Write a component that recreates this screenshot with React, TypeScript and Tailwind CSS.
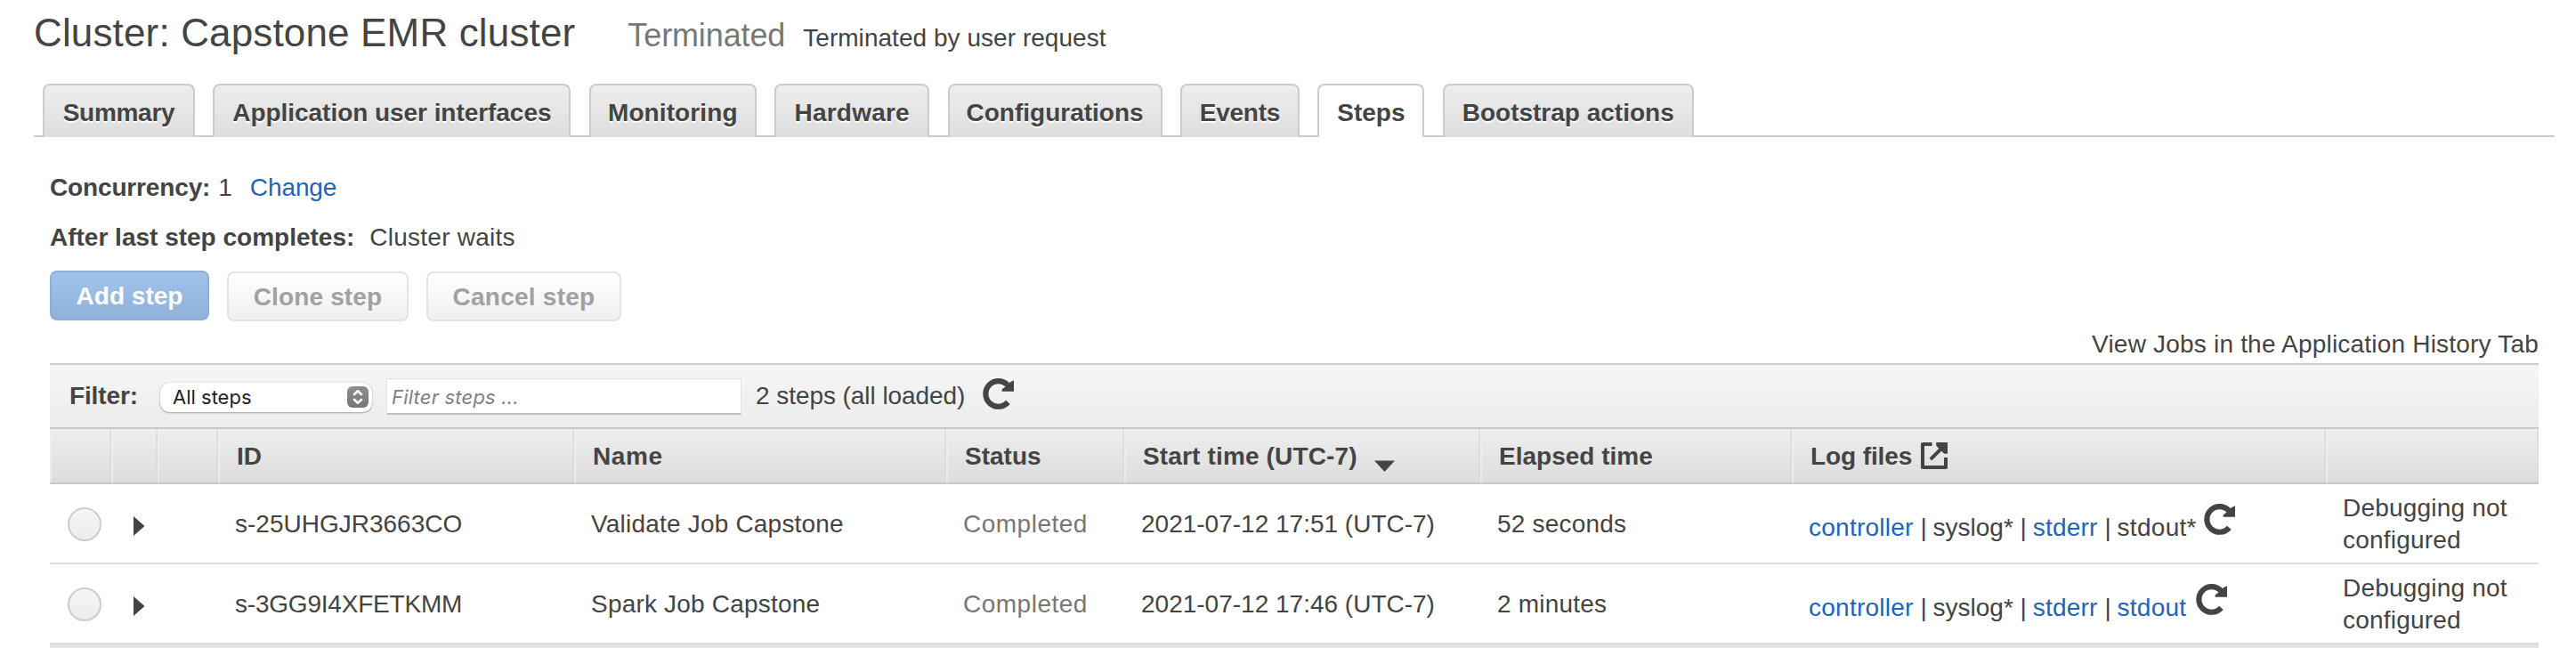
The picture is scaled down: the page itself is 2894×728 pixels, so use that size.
import React from "react";

const tabs = [
  { label: "Summary", cls: "w-[171px] tracking-[-0.3px]" },
  { label: "Application user interfaces", cls: "w-[402px] tracking-[-0.05px]" },
  { label: "Monitoring", cls: "w-[188px] tracking-[0.1px]" },
  { label: "Hardware", cls: "w-[174px] tracking-[0.2px]" },
  { label: "Configurations", cls: "w-[241px]" },
  { label: "Events", cls: "w-[134px] tracking-[-0.25px]" },
  { label: "Steps", cls: "w-[120px]", active: true },
  { label: "Bootstrap actions", cls: "w-[282px]" },
];

const steps = [
  {
    id: "s-25UHGJR3663CO",
    idCls: "",
    name: "Validate Job Capstone",
    start: "2021-07-12 17:51 (UTC-7)",
    elapsed: "52 seconds",
    stdoutReady: false,
  },
  {
    id: "s-3GG9I4XFETKMM",
    idCls: "tracking-[-0.21px]",
    name: "Spark Job Capstone",
    start: "2021-07-12 17:46 (UTC-7)",
    elapsed: "2 minutes",
    stdoutReady: true,
  },
];

const columns =
  "grid grid-cols-[69px_52px_68px_400px_418px_200px_400px_350px_600px_239px]";

function RefreshIcon({ className = "" }: { className?: string }) {
  return (
    <svg viewBox="0 0 35 36" className={`h-[36px] w-[35px] shrink-0 ${className}`}>
      <path d="M28.4 26.9A14.3 14.3 0 1 1 28 7.6" fill="none" stroke="#444" strokeWidth="6.2" />
      <path d="M35 2.2V14.8H21.6V12.6L25.5 9.4L30.5 4.6Z" fill="#444" />
    </svg>
  );
}

function ExternalIcon() {
  return (
    <svg viewBox="0 0 30 30" className="mb-[2px] ml-[10px] h-[30px] w-[30px] shrink-0">
      <path d="M12.5 2H2V28H28V17" fill="none" stroke="#444" strokeWidth="4" strokeLinejoin="round" />
      <path d="M10.8 19.2L26 4" fill="none" stroke="#444" strokeWidth="4" />
      <path d="M17 0H30V12.7H26.2L17.4 4Z" fill="#444" />
    </svg>
  );
}

function HeaderCell({ children }: { children?: React.ReactNode }) {
  return (
    <div className="flex h-[60px] items-center border-r-2 border-l-2 border-r-[#d8d8d8]/70 border-l-[#f1f1f1]/70 pt-[2px] pl-[19px] font-bold whitespace-pre">
      {children}
    </div>
  );
}

function Link({ children }: { children: React.ReactNode }) {
  return <a className="tracking-[0.25px] text-[#2364b8]">{children}</a>;
}

function Pipe() {
  return <span className="tracking-[-1px]">|</span>;
}

export default function App() {
  return (
    <div className="h-[728px] w-[2894px] overflow-hidden bg-white font-['Liberation_Sans',Arial,sans-serif] text-[28px] leading-[36px] text-[#444]">
      <header className="flex h-[94px] items-baseline pt-[15px] pl-[38px] whitespace-pre">
        <h1 className="text-[44px] leading-[44px] tracking-[0.15px]">Cluster: Capstone EMR cluster</h1>
        <span className="ml-[59px] text-[36px] tracking-[-0.12px] text-[#777]">Terminated</span>
        <span className="ml-[20px] tracking-[0.04px]">Terminated by user request</span>
      </header>

      <nav className="mr-[24px] ml-[38px] flex h-[60px] gap-[20.4px] border-b-2 border-[#ccc] pl-[10px]">
        {tabs.map((t) => (
          <div
            key={t.label}
            className={`h-[60px] shrink-0 rounded-t-[8px] border-2 border-b-0 border-[#ccc] pt-[13px] text-center font-bold whitespace-pre ${t.cls} ${
              t.active
                ? "bg-white"
                : "bg-linear-to-b from-[#eee] to-[#ddd] [text-shadow:0_2px_0_#fff]"
            }`}
          >
            {t.label}
          </div>
        ))}
      </nav>

      <main className="mr-[42px] ml-[56px] pt-[39px] whitespace-pre">
        <div className="flex h-[36px]">
          <span className="font-bold tracking-[-0.15px]">Concurrency:</span>
          <span className="ml-[9px]">1</span>
          <span className="ml-[20px] tracking-[-0.1px] text-[#2364b8]">Change</span>
        </div>
        <div className="mt-[20px] flex h-[36px]">
          <span className="font-bold">After last step completes:</span>
          <span className="ml-[17px] tracking-[0.25px]">Cluster waits</span>
        </div>

        <div className="mt-[19px] flex h-[57px] gap-[20px] text-center font-bold">
          <button className="h-[56px] w-[179px] rounded-[8px] border-2 border-[#8cb0d9] bg-linear-to-b from-[#a1c2eb] to-[#8fb1da] pt-px font-bold text-white">
            Add step
          </button>
          <button className="mt-px h-[56px] w-[204px] rounded-[8px] border-2 border-[#e4e4e4] bg-linear-to-b from-white to-[#f0f0f0] pt-px font-bold tracking-[0.14px] text-[#a1a1a1]">
            Clone step
          </button>
          <button className="mt-px h-[56px] w-[219px] rounded-[8px] border-2 border-[#e4e4e4] bg-linear-to-b from-white to-[#f0f0f0] pt-px font-bold tracking-[0.24px] text-[#a1a1a1]">
            Cancel step
          </button>
        </div>

        <div className="mt-[8px] h-[39px] text-right tracking-[0.2px]">
          View Jobs in the Application History Tab
        </div>

        <div className="flex h-[72px] items-center border-t-2 border-[#ccc] bg-linear-to-b from-[#f6f6f6] to-[#ececec] pl-[22px]">
          <span className="w-[102px] font-bold tracking-[-0.13px]">Filter:</span>
          <div className="mt-[2px] flex h-[33px] w-[238px] items-center justify-between rounded-[10px] bg-white pr-[4px] pl-[14px] shadow-[0_1px_2px_rgba(0,0,0,0.3),0_0_1px_rgba(0,0,0,0.25)]">
            <span className="font-[Inter,sans-serif] text-[22px] leading-[28px] text-[#222]">All steps</span>
            <svg viewBox="0 0 24 24" className="h-[24px] w-[24px]">
              <defs>
                <linearGradient id="knob" x1="0" y1="0" x2="0" y2="1">
                  <stop offset="0" stopColor="#8e8e8e" />
                  <stop offset="1" stopColor="#767676" />
                </linearGradient>
              </defs>
              <rect width="24" height="24" rx="6" fill="url(#knob)" />
              <path
                d="M8 9L12 5.3L16 9M8 15L12 18.7L16 15"
                fill="none"
                stroke="#fff"
                strokeWidth="2.6"
                strokeLinecap="round"
                strokeLinejoin="round"
              />
            </svg>
          </div>
          <div className="ml-[16px] flex h-[41px] w-[399px] items-center border border-b-2 border-[#e4e4e4] border-b-[#c0c0c0] bg-white pt-[3px] pl-[5px]">
            <span className="font-[Inter,sans-serif] text-[22px] leading-[28px] tracking-[0.2px] text-[#808080] italic">
              Filter steps ...
            </span>
          </div>
          <span className="ml-[16px] tracking-[-0.06px]">2 steps (all loaded)</span>
          <RefreshIcon className="mb-[5px] ml-[20px]" />
        </div>

        <div className={`${columns} border-y-2 border-[#c8c8c8] bg-linear-to-b from-[#eee] to-[#ddd]`}>
          <HeaderCell />
          <HeaderCell />
          <HeaderCell />
          <HeaderCell>ID</HeaderCell>
          <HeaderCell>
            <span className="tracking-[0.6px]">Name</span>
          </HeaderCell>
          <HeaderCell>Status</HeaderCell>
          <HeaderCell>
            <span className="tracking-[0.15px]">Start time (UTC-7)</span>
            <svg viewBox="0 0 23 13" className="mt-[20px] ml-[19px] h-[13px] w-[23px]">
              <path d="M0 0.5H23L11.5 13Z" fill="#444" />
            </svg>
          </HeaderCell>
          <HeaderCell>Elapsed time</HeaderCell>
          <HeaderCell>
            <span className="tracking-[-0.1px]">Log files</span>
            <ExternalIcon />
          </HeaderCell>
          <HeaderCell />
        </div>

        {steps.map((s, i) => (
          <div
            key={s.id}
            className={`${columns} items-center ${i === 0 ? "h-[90px] border-b-2 border-[#ddd]" : "h-[88px]"}`}
          >
            <div className="pt-[2px] pl-[20px]">
              <div className="h-[38px] w-[38px] rounded-full border-2 border-[#ccc] bg-linear-to-b from-[#f6f6f6] to-[#ececec]" />
            </div>
            <div className="pt-[6px] pl-[25px]">
              <svg viewBox="0 0 13 22" className="block h-[22px] w-[13px]">
                <path d="M0 0L12.5 11L0 22Z" fill="#444" />
              </svg>
            </div>
            <div />
            <div className={`pt-[2px] pl-[19px] ${s.idCls}`}>{s.id}</div>
            <div className="pt-[2px] pl-[19px] tracking-[0.2px]">{s.name}</div>
            <div className="pt-[2px] pl-[19px] tracking-[0.5px] text-[#777]">Completed</div>
            <div className="pt-[2px] pl-[19px]">{s.start}</div>
            <div className="pt-[2px] pl-[19px] tracking-[0.2px]">{s.elapsed}</div>
            <div className="pl-[19px]">
              <Link>controller</Link> <Pipe /> syslog* <Pipe /> <Link>stderr</Link> <Pipe />{" "}
              {s.stdoutReady ? <Link>stdout</Link> : <span className="tracking-[0.29px]">stdout*</span>}
              <RefreshIcon
                className={`inline-block align-baseline ${s.stdoutReady ? "ml-[11px]" : "ml-[8px]"}`}
              />
            </div>
            <div className="pt-[2px] pl-[19px] tracking-[0.2px] whitespace-normal">Debugging not configured</div>
          </div>
        ))}

        <div className="h-[6px] bg-linear-to-b from-[#dcdcdc] to-[#e6e6e6]" />
      </main>
    </div>
  );
}
